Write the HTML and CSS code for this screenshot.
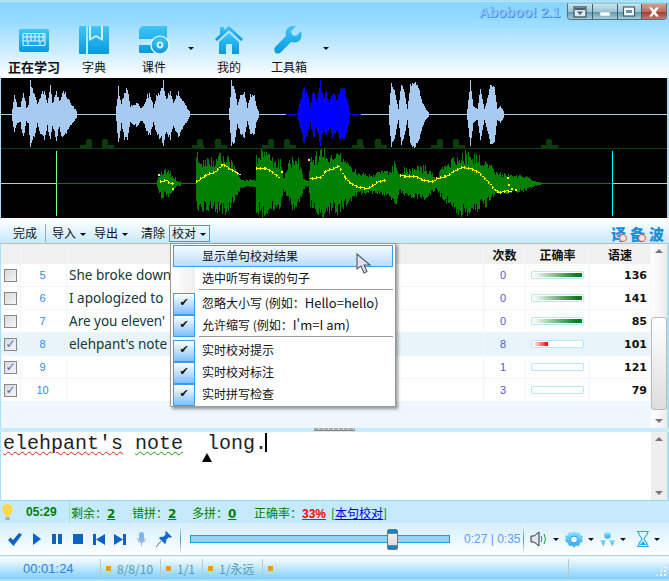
FILE: index.html
```html
<!DOCTYPE html>
<html lang="zh">
<head>
<meta charset="utf-8">
<title>Aboboo! 2.1</title>
<link rel="stylesheet" href="styles.css">
</head>
<body>
<svg class="defs" width="0" height="0" aria-hidden="true">
  <defs>
    <linearGradient id="ib" x1="0" y1="0" x2="0" y2="1"><stop offset="0" stop-color="#3fc6f6"/><stop offset="1" stop-color="#0a9ae2"/></linearGradient>
    <linearGradient id="ic" x1="0" y1="0" x2="0" y2="1"><stop offset="0" stop-color="#8fe4fb"/><stop offset="1" stop-color="#2ea6ee"/></linearGradient>
  </defs>
</svg>
<div class="app">
  <header class="head">
    <div class="titlebar">
      <span class="apptitle">Aboboo! 2.1</span>
      <div class="winbtns">
        <span class="wb"><svg width="14" height="12" viewBox="0 0 14 12"><rect x="1" y="1" width="12" height="10" fill="#dfe8ec" stroke="#46606e" stroke-width="1.4"/><rect x="2" y="2" width="10" height="2" fill="#46606e"/><path d="M4 5.500h6L7 9z" fill="#46606e"/></svg></span>
        <span class="wb"><svg width="14" height="12" viewBox="0 0 14 12"><rect x="2" y="6" width="10" height="4" fill="#fff" stroke="#8aa" stroke-width=".6"/></svg></span>
        <span class="wb"><svg width="14" height="12" viewBox="0 0 14 12"><rect x="1.500" y="1" width="11" height="9" fill="#fff" stroke="#40606e" stroke-width="1.200"/><rect x="4" y="4" width="6" height="3" fill="#5a96b8"/></svg></span>
        <span class="wb wb-close"><svg width="14" height="12" viewBox="0 0 14 12"><path d="M2 1.500h3L7 4l2-2.500h3L8.700 6 12 10.500H9L7 8l-2 2.500H2L5.300 6z" fill="#fff"/></svg></span>
      </div>
    </div>
    <nav class="tools">
      <div class="tool tool-active">
        <svg width="32" height="28" viewBox="0 0 32 28"><rect x="1" y="3" width="30" height="23" rx="2" fill="url(#ib)"/><path d="M6 7.500h20a1 1 0 0 1 1 1v10a1 1 0 0 1-1 1H6a1 1 0 0 1-1-1v-10a1 1 0 0 1 1-1zM5 11h22M5 15h22M9 7.500V15M13 7.500V15M17 7.500V15M21 7.500V15M25 7.500V15M10 15v4.500M22 15v4.500" fill="none" stroke="#d8f4fd" stroke-width="1.100"/></svg>
        <span>正在学习</span>
      </div>
      <div class="tool">
        <svg width="32" height="28" viewBox="0 0 32 28"><path d="M2 0h6v28H2a1 1 0 0 1-1-1V1a1 1 0 0 1 1-1zM10 0h20a1 1 0 0 1 1 1v26a1 1 0 0 1-1 1H10z" fill="url(#ib)"/><path d="M13 0v12l5-3 5 3V0h2v15l-7-4-7 4V0z" fill="#d4f1fc"/></svg>
        <span>字典</span>
      </div>
      <div class="tool">
        <svg width="32" height="28" viewBox="0 0 32 28"><path d="M6 0h23v13H1V5a5 5 0 0 1 5-5zM1 19h16v8H2a1 1 0 0 1-1-1z" fill="url(#ib)"/><circle cx="22" cy="19" r="9" fill="url(#ib)" stroke="#fff" stroke-width="1.200"/><circle cx="22" cy="19" r="3.400" fill="#d9f3fd"/><circle cx="22" cy="19" r="1.400" fill="#1aa6e8"/></svg>
        <span>课件</span>
      </div>
      <i class="drop drop-tool"></i>
      <div class="tool">
        <svg width="32" height="28" viewBox="0 0 32 28"><path d="M16 0l14 13-2 2L16 4 4 15l-2-2 5-5V1h4v3z" fill="url(#ib)"/><path d="M16 7l10 9v12h-7V18h-6v10H6V16z" fill="url(#ib)"/></svg>
        <span>我的</span>
      </div>
      <div class="tool">
        <svg width="32" height="28" viewBox="0 0 32 28"><path d="M28 5l-5 5-4-1-1-4 5-5c-4-1-9 1-10 5-1 3 0 4 0 5L3 20c-2 2-2 4-1 6s4 2 6 0l10-10c2 .5 5 1 8-1 3-2 3-7 2-10z" fill="url(#ib)"/></svg>
        <span>工具箱</span>
      </div>
      <i class="drop drop-tool"></i>
    </nav>
  </header>

  <svg id="wave" class="wave" width="666" height="140" viewBox="0 0 666 140" shape-rendering="crispEdges" role="img" aria-label="waveform"></svg>

  <div class="subbar">
    <span class="sb">完成</span>
    <i class="sb-sep"></i>
    <span class="sb">导入<i class="drop"></i></span>
    <span class="sb">导出<i class="drop"></i></span>
    <span class="sb sb-clear">清除</span>
    <span class="sb sb-on">校对<i class="drop"></i></span>
    <span class="logo"><b class="badged">译</b><b class="badged">备</b><b>波</b></span>
  </div>

  <section class="listarea">
    <div class="list">
      <div class="row row-head"><div></div><div></div><div></div><div>次数</div><div>正确率</div><div>语速</div></div>
      <div class="row"><div class="cb"><i class="check"></i></div><div class="idx">5</div><div class="sent">She broke down</div><div class="cnt">0</div><div class="bar"><i class="track"><i class="fill fill-g"></i></i></div><div class="spd">136</div></div>
      <div class="row"><div class="cb"><i class="check"></i></div><div class="idx">6</div><div class="sent">I apologized to</div><div class="cnt">0</div><div class="bar"><i class="track"><i class="fill fill-g"></i></i></div><div class="spd">141</div></div>
      <div class="row"><div class="cb"><i class="check"></i></div><div class="idx">7</div><div class="sent">Are you eleven'</div><div class="cnt">0</div><div class="bar"><i class="track"><i class="fill fill-g"></i></i></div><div class="spd">85</div></div>
      <div class="row row-sel"><div class="cb"><i class="check on">✓</i></div><div class="idx">8</div><div class="sent">elehpant's note</div><div class="cnt">8</div><div class="bar"><i class="track"><i class="fill fill-r"></i></i></div><div class="spd">101</div></div>
      <div class="row"><div class="cb"><i class="check on">✓</i></div><div class="idx">9</div><div class="sent"></div><div class="cnt">1</div><div class="bar"><i class="track"></i></div><div class="spd">121</div></div>
      <div class="row"><div class="cb"><i class="check on">✓</i></div><div class="idx">10</div><div class="sent"></div><div class="cnt">3</div><div class="bar"><i class="track"></i></div><div class="spd">79</div></div>
    </div>
    <div class="vscroll">
      <i class="arrow-up"></i>
      <i class="thumb"></i>
      <i class="arrow-down"></i>
    </div>
  </section>

  <div class="splitter"><i class="grip"></i></div>

  <section class="editor">
    <div class="typed"><span class="err-r">elehpant's</span> <span class="err-g">note</span>  long.<i class="caret"></i></div>
    <i class="missing"></i>
    <div class="vscroll vscroll-ed"><i class="arrow-up"></i><i class="arrow-down"></i></div>
  </section>

  <div class="status">
    <svg class="bulb" width="11" height="17" viewBox="0 0 11 17"><path d="M5.500 0a5.500 5.500 0 0 1 3 10c-.6.500-.8 1.500-.8 2.500H3.300c0-1-.2-2-.8-2.500a5.500 5.500 0 0 1 3-10z" fill="#ffd84a"/><rect x="3.500" y="13" width="4" height="3" fill="#aaa"/></svg>
    <span class="clock">05:29</span>
    <i class="st-sep"></i>
    <span class="st st1">剩余：<u>2</u></span>
    <span class="st st2">错拼：<u>2</u></span>
    <span class="st st3">多拼：<u>0</u></span>
    <span class="st st4">正确率：<u class="pct">33%</u></span>
    <span class="st st5">[<a href="#">本句校对</a>]</span>
  </div>

  <div class="controls">
    <svg class="c1" width="14" height="13" viewBox="0 0 14 13"><path d="M0 7l2.500-2.500L5 7l6-7 3 1.500L5.500 13z" fill="#0d63c4"/></svg>
    <svg class="c2" width="8" height="12" viewBox="0 0 8 12"><path d="M0 0l8 6-8 6z" fill="#0d63c4"/></svg>
    <svg class="c3" width="10" height="10" viewBox="0 0 10 10"><path d="M0 0h4v10H0zM6 0h4v10H6z" fill="#0d63c4"/></svg>
    <svg class="c4" width="10" height="10" viewBox="0 0 10 10"><rect width="10" height="10" fill="#0d63c4"/></svg>
    <svg class="c5" width="12" height="11" viewBox="0 0 12 11"><path d="M0 0h3v11H0zM12 0v11L3 5.500z" fill="#0d63c4"/></svg>
    <svg class="c6" width="12" height="11" viewBox="0 0 12 11"><path d="M12 0H9v11h3zM0 0v11l9-5.500z" fill="#0d63c4"/></svg>
    <svg class="c7" width="9" height="15" viewBox="0 0 9 15"><rect x="2" y="0" width="5" height="10" rx="2.500" fill="#7fb6ef"/><path d="M.7 6v1a3.800 3.800 0 0 0 7.600 0V6M4.500 11v3" fill="none" stroke="#9db9d6"/></svg>
    <svg class="c8" width="16" height="16" viewBox="0 0 16 16"><path d="M10 0l6 6-2 1-1-1-3 3c.5 1.500 0 3-1 4L3 7c1-1 2.500-1.500 4-1l3-3-1-1z" fill="#1266c8"/><path d="M5 10l-5 6" stroke="#667" fill="none"/></svg>
    <i class="ct-sep ct-sep1"></i>
    <div class="slider"><i class="knob"></i></div>
    <span class="time">0:27 | 0:35</span>
    <i class="ct-sep ct-sep2"></i>
    <svg class="c9" width="18" height="16" viewBox="0 0 18 16"><path d="M1 5h3l5-4v14l-5-4H1z" fill="#dfe6f2" stroke="#333"/><path d="M11 5q2 3 0 6" fill="none" stroke="#2a70c8"/><path d="M14 3q3 5 0 10" fill="none" stroke="#1f9c3c"/></svg>
    <i class="drop"></i>
    <svg class="c10" width="18" height="17" viewBox="0 0 18 17"><path d="M9 0l2 2 3-1 1 3 3 1-1 3 1 1-1 2-2 1-1 3-3-.5-2 2-2-2-3 .5-1-3-2-1-1-2 1-1-1-3 3-1 1-3 3 1z" fill="url(#ic)"/><circle cx="9" cy="8.500" r="3.500" fill="#e8f8ff" stroke="#2a9ae8"/></svg>
    <i class="drop"></i>
    <svg class="c11" width="15" height="15" viewBox="0 0 15 15"><circle cx="7.500" cy="3.500" r="3.300" fill="url(#ic)"/><path d="M0 8h6L3.500 14zM9 8h6l-2.500 6z" fill="url(#ic)"/></svg>
    <i class="drop"></i>
    <svg class="c12" width="12" height="16" viewBox="0 0 12 16"><path d="M0 .5h12M0 15.500h12M1.500 1c0 5 3.500 5 3.500 7s-3.500 2-3.500 7M10.500 1c0 5-3.500 5-3.500 7s3.500 2 3.500 7" fill="none" stroke="#2ab0e8" stroke-width="1.200"/><path d="M2.500 14l3.500-4 3.500 4z" fill="#2ab0e8"/></svg>
    <i class="drop"></i>
  </div>

  <footer class="foot">
    <span class="f-time">00:01:24</span>
    <span class="f-cell f1"><i class="sq"></i>8/8/10</span>
    <span class="f-cell f2"><i class="sq"></i>1/1</span>
    <span class="f-cell f3"><i class="sq"></i>1/永远</span>
    <span class="f-cell f4"><i class="sq"></i></span>
    <span class="f-end"></span>
    <span class="f-grip"></span>
  </footer>

  <div class="menu">
    <div class="mi mi-hot"><span class="mc"></span>显示单句校对结果</div>
    <div class="mi"><span class="mc"></span>选中听写有误的句子</div>
    <div class="ms"></div>
    <div class="mi"><span class="mc on"></span>忽略大小写 (例如：<span class="lat">Hello=hello)</span></div>
    <div class="mi"><span class="mc on"></span>允许缩写 (例如：<span class="lat">I'm=I am)</span></div>
    <div class="ms"></div>
    <div class="mi"><span class="mc on"></span>实时校对提示</div>
    <div class="mi"><span class="mc on"></span>实时校对标注</div>
    <div class="mi"><span class="mc on"></span>实时拼写检查</div>
  </div>
  <svg class="cursor" width="17" height="22" viewBox="0 0 17 22"><path d="M1 1v15l4-3 3 7 3-1.500-3-6.500h6z" fill="#dfe3e8" stroke="#556" stroke-width="1.100"/></svg>
</div>
<script src="script.js"></script>
</body>
</html>
```
FILE: styles.css
```css
* { box-sizing: border-box; }
html, body { margin: 0; padding: 0; }
body { width: 669px; height: 581px; overflow: hidden; font: 12px "Noto Sans CJK SC", "Liberation Sans", sans-serif; color: #111; }
i { font-style: normal; }
.defs { position: absolute; }
.app { position: relative; width: 669px; height: 581px; display: flex; flex-direction: column; background: #a8dff7; padding: 0 2px 2px 1px; overflow: hidden; }

.head { height: 77px; flex: none; margin: 1px -2px 0 -1px; padding: 0 2px 0 1px; border-top: 1px solid #b7e6f8; background: linear-gradient(#8ad6ff 0, #93daff 22%, #c9ecff 62%, #fff 100%); }
.titlebar { height: 23px; display: flex; justify-content: flex-end; align-items: flex-start; padding-top: 1px; }
.apptitle { font: bold 14px "Liberation Sans", sans-serif; color: #8cc6ff; text-shadow: 1px 1px 0 #3f8fe8; margin: 1px 7px 0 0; }
.winbtns { display: flex; width: 100px; height: 17px; border: 1px solid #54707e; border-top-color: #9cc; border-radius: 0 0 4px 4px; overflow: hidden; }
.wb { flex: 1; display: flex; align-items: center; justify-content: center; background: linear-gradient(#c9e3ec, #9cc6d6 50%, #5f9ab2 55%, #a8ccd8); border-right: 1px solid #3f5d6c; }
.wb-close { background: linear-gradient(#d69c90, #c06a5e 50%, #a03f35 55%, #c07a70); border-right: 0; }
.tools { display: flex; align-items: flex-start; padding: 1px 0 0 3px; }
.tool { width: 60px; display: flex; flex-direction: column; align-items: center; gap: 5px; line-height: 15px; white-space: nowrap; }
.tool svg { display: block; }
.tool-active span { font-weight: 700; font-size: 13px; }
.drop { display: inline-block; width: 0; height: 0; border: 3px solid transparent; border-top: 3px solid #111; border-bottom: 0; vertical-align: middle; margin-left: 4px; }
.drop-tool { margin: 21px 5px 0 4px; }

.wave { display: block; flex: none; background: #000; width: 666px; height: 140px; }

.subbar { height: 25px; flex: none; display: flex; align-items: flex-end; margin: 0 -2px 0 -1px; padding: 0 5px 0 12px; background: linear-gradient(#fff 5%, #c6e9fb); }
.sb { height: 17px; line-height: 15px; padding: 0 1px; white-space: nowrap; margin-bottom: 1px; }
.sb-sep { width: 1px; height: 18px; background: #9ab; margin: 0 5px 1px 7px; }
.sb + .sb { margin-left: 6px; }
.sb-clear { margin-left: 11px !important; }
.sb-on { margin-left: 3px !important; border: 1px solid #3a9cec; padding: 0 4px 0 2px; width: 41px; line-height: 14px; }
.logo { margin-left: auto; display: flex; gap: 4px; font: 700 15px/17px "Noto Sans CJK SC", sans-serif; color: #1a8fd8; margin-bottom: 1px; }
.badged { position: relative; }
.badged::after { content: ""; position: absolute; right: -1px; bottom: 0; width: 6px; height: 6px; border: 1px solid #e05a4a; border-radius: 50%; background: #fbe4df; }

.listarea { height: 185px; flex: none; display: flex; background: #eef7fe; border-top: 1px solid #bbb; }
.list { width: 649px; flex: none; display: flex; flex-direction: column; }
.row { display: grid; grid-template-columns: 19px 45px 416px 41px 63px 1fr; column-gap: 1px; height: 22px; margin-bottom: 1px; align-items: stretch; }
.row > div { background: #fff; display: flex; align-items: center; }
.row-head { height: 20px; margin-bottom: 0; }
.row-head > div { background: #f0f0f0; justify-content: center; font-weight: 700; }
.row-sel > div { background: #e8f4fa; }
.cb { justify-content: center; }
.check { width: 13px; height: 13px; border: 1px solid #888; background: linear-gradient(135deg, #d8d8d8, #f6f6f6); display: block; font: 700 12px/11px "DejaVu Sans", sans-serif; text-align: center; color: #4a6fc0; }
.idx { justify-content: center; color: #2a8cf0; font-size: 11px; font-family: "Liberation Sans", sans-serif; padding-right: 2px; }
.sent { padding-left: 2px; font: 13.500px "Noto Sans", "Liberation Sans", sans-serif; color: #0e3a3e; white-space: nowrap; }
.cnt { justify-content: center; padding-right: 3px; color: #5a5ab8; font: 11px "Liberation Sans", sans-serif; }
.bar { justify-content: center; }
.track { display: block; width: 53px; height: 8px; border: 1px solid #b5e6fa; border-radius: 2px; background: #fff; padding: 1px; }
.fill { display: block; height: 100%; }
.fill-g { background: linear-gradient(90deg, #fff, #007d1c 90%); }
.fill-r { width: 30%; background: linear-gradient(90deg, #fff, #f00); }
.spd { justify-content: flex-end; padding-right: 3px; font: 700 11px "DejaVu Sans", sans-serif; }

.vscroll { position: relative; width: 16px; flex: none; margin-left: 1px; background: linear-gradient(90deg, #fff, #ececec); }
.arrow-up, .arrow-down { position: absolute; left: 4px; width: 0; height: 0; border: 4px solid transparent; }
.arrow-up { top: 5px; border-bottom: 4px solid #777; border-top: 0; }
.arrow-down { bottom: 5px; border-top: 4px solid #777; border-bottom: 0; }
.thumb { position: absolute; left: 0; right: 0; top: 73px; height: 93px; border: 1px solid #bbb; border-radius: 3px; background: linear-gradient(#fff, #ddd); }

.splitter { height: 4px; flex: none; position: relative; background: #c5ebfd; margin: 0 -2px 0 -1px; }
.grip { position: absolute; left: 314px; top: 0; width: 41px; height: 3px; background: repeating-linear-gradient(90deg, #aaa 0 4px, #ddd 4px 5px); border-bottom: 1px solid #888; }

.editor { position: relative; height: 69px; flex: none; background: #fff; display: flex; border-bottom: 1px solid #9fd4ef; }
.typed { flex: 1; padding: 1px 0 0 2px; font: 20px/22px "Liberation Mono", monospace; white-space: pre; color: #222; }
.err-r { text-decoration: underline wavy #e02020 1px; text-underline-offset: 2px; }
.err-g { text-decoration: underline wavy #169b16 1px; text-underline-offset: 2px; }
.caret { display: inline-block; width: 2px; height: 19px; margin-left: -2px; background: #000; vertical-align: -3px; }
.missing { position: absolute; left: 201px; top: 21px; width: 0; height: 0; border: 5px solid transparent; border-bottom: 9px solid #000; border-top: 0; }
.vscroll-ed { background: #eee; }

.status { height: 22px; flex: none; position: relative; display: flex; align-items: center; background: #c5eafd; color: #008000; white-space: nowrap; margin: 0 -2px 0 -1px; padding-left: 2px; }
.bulb { flex: none; }
.clock { font: 700 12px "Liberation Sans", sans-serif; margin-left: 13px; width: 43px; }
.st-sep { width: 1px; height: 22px; background: #a8e0c0; }
.st { font-size: 12px; }
.st u { font: 700 12px "DejaVu Sans", sans-serif; }
.st1 { margin-left: 1px; width: 61px; }
.st2 { width: 60px; }
.st3 { width: 62px; }
.st4 { width: 77px; }
.st .pct { color: #f00; font: 700 12px "Liberation Sans", sans-serif; }
.st5 a { color: #0000e0; }

.controls { height: 32px; flex: none; display: flex; align-items: center; background: linear-gradient(#d4effd, #fff); margin: 0 -2px 0 -1px; padding-left: 8px; }
.controls svg { flex: none; }
.c2 { margin-left: 11px; } .c3 { margin-left: 11px; } .c4 { margin-left: 11px; } .c5 { margin-left: 10px; } .c6 { margin-left: 9px; } .c7 { margin-left: 11px; } .c8 { margin-left: 10px; }
.ct-sep { width: 1px; height: 30px; background: linear-gradient(#fff, #4a8fc0, #fff); flex: none; }
.ct-sep1 { margin-left: 8px; }
.slider { position: relative; width: 260px; height: 8px; margin-left: 9px; background: #8fd4fa; border: 1px solid #12a0e0; flex: none; }
.knob { position: absolute; left: 196px; top: -7px; width: 11px; height: 21px; border: 1px solid #777; border-radius: 2px; background: linear-gradient(#0d84cc 18%, #eee 20%, #ddd 80%, #0d84cc 82%); }
.time { margin-left: 14px; width: 59px; font: 12px "Liberation Sans", sans-serif; color: #5a9eff; white-space: nowrap; flex: none; }
.c9 { margin-left: 6px; } .c10 { margin-left: 6px; } .c11 { margin-left: 6px; } .c12 { margin-left: 11px; }
.controls .drop { margin-left: 5px; }

.foot { flex: 1; position: relative; display: flex; align-items: center; background: linear-gradient(#fff, #7fd0fb); margin: 1px -2px 0 -1px; border-top: 1px solid #d8f1fd; padding: 1px 0 0 23px; font: 12px "Liberation Sans", sans-serif; white-space: nowrap; }
.f-time { width: 77px; color: #2a7fe0; font-size: 13px; }
.f-cell { height: 19px; display: flex; align-items: center; gap: 6px; border-left: 1px solid #b8c8d4; padding-left: 5px; color: #5a9bb0; font-family: "Noto Sans CJK SC", sans-serif; }
.sq { width: 5px; height: 5px; background: #ff9800; display: block; }
.f1 { width: 60px; } .f2 { width: 42px; } .f3 { width: 60px; } .f4 { width: 306px; }
.f-end { width: 1px; height: 19px; background: #b8c8d4; }
.f-grip { position: absolute; right: 2px; bottom: 2px; width: 12px; height: 12px; background: radial-gradient(circle, #fff 1.100px, transparent 1.300px) 0 0 / 4px 4px; clip-path: polygon(100% 0, 100% 100%, 0 100%); }

.menu { position: absolute; left: 170px; top: 243px; width: 226px; height: 164px; padding: 1px 2px; border: 1px solid #999; background: linear-gradient(90deg, #fff 1px, #eee 24px, #fff 24px); box-shadow: 2px 2px 3px rgba(0, 0, 0, .4); }
.mi { position: relative; height: 22px; display: flex; align-items: center; white-space: nowrap; color: #111; font-size: 12px; padding-bottom: 1px; }
.mi-hot { border: 1px solid #3a9cec; background: linear-gradient(#f6fbff, #b8defc); padding-bottom: 2px; }
.mc { width: 29px; flex: none; display: block; height: 21px; }
.mi-hot .mc { width: 28px; }
.lat { font-size: 13px; }
.mc.on { position: relative; }
.mc.on::before { content: "✔"; position: absolute; left: 0; top: 1px; width: 20px; height: 20px; border: 1px solid #3a9cec; background: linear-gradient(#fff, #7fc0fa); font: 11px/18px "DejaVu Sans", sans-serif; color: #111; text-align: center; }
.ms { height: 3px; margin-left: 26px; border-top: 1px solid #999; }
.cursor { position: absolute; left: 356px; top: 253px; }
```
FILE: script.js
```js
(function () {
  var svg = document.getElementById('wave');
  var seed = 11;
  function rnd() { seed = (seed * 16807) % 2147483647; return seed / 2147483647; }
  function env(pts, x) {
    for (var i = 0; i < pts.length - 1; i++) {
      if (x >= pts[i][0] && x <= pts[i + 1][0]) {
        var t = (x - pts[i][0]) / ((pts[i + 1][0] - pts[i][0]) || 1);
        return pts[i][1] + (pts[i + 1][1] - pts[i][1]) * t;
      }
    }
    return 0;
  }
  function add(d, col) {
    var p = document.createElementNS('http://www.w3.org/2000/svg', 'path');
    p.setAttribute('d', d);
    p.setAttribute('fill', 'none');
    p.setAttribute('stroke', col);
    svg.appendChild(p);
  }
  function rect(x, y, w, h, col) {
    var r = document.createElementNS('http://www.w3.org/2000/svg', 'rect');
    r.setAttribute('x', x); r.setAttribute('y', y); r.setAttribute('width', w); r.setAttribute('height', h); r.setAttribute('fill', col);
    svg.appendChild(r);
  }
  var OX = 1, OY = 78;
  var top = 114 - OY, bot = 183 - OY;
  var light = '#a7cbf0', blue = '#0000ff', green = '#008000';

  function tone(n, comb) {
    var r = rnd();
    if (comb && r < comb) return 1 - n - .25 * rnd();
    return 1 - n * rnd();
  }
  function burst(pts, cy, noise, col, comb) {
    var d = '';
    for (var x = pts[0][0]; x <= pts[pts.length - 1][0]; x++) {
      var e = env(pts, x);
      var a = e * tone(noise, comb);
      var b = e * tone(noise, comb);
      d += 'M' + (x - 0.5) + ' ' + Math.round(cy - a) + 'V' + Math.round(cy + b + 1);
    }
    add(d, col);
  }

  rect(0, top, 666, 1, light);
  rect(286 - OX, top, 75, 1, blue);
  burst([[12,6],[14,20],[17,8],[20,8],[23,25],[26,7],[28,10],[30,33],[34,24],[37,10],[40,20],[44,26],[47,12],[50,30],[52,12],[56,26],[59,14],[62,25],[65,22],[68,16],[72,10],[76,3]], top, .22, light);
  burst([[116,8],[118,30],[121,10],[124,26],[127,28],[130,8],[134,11],[137,12],[141,6],[143,8],[147,20],[150,22],[153,7],[156,20],[160,25],[163,30],[166,18],[170,26],[173,12],[178,24],[182,16],[186,8],[189,3]], top, .22, light);
  burst([[229,6],[231,32],[234,28],[237,10],[240,20],[244,24],[247,7],[250,20],[254,20],[256,8],[258,3]], top, .15, light);
  burst([[298,6],[302,24],[304,30],[307,22],[310,8],[313,26],[316,14],[320,32],[323,18],[326,24],[329,14],[333,26],[337,16],[340,30],[344,28],[348,10],[349,3]], top, .25, blue);
  burst([[389,10],[391,32],[394,25],[398,5],[401,32],[404,22],[407,5],[410,30],[414,34],[418,28],[422,12],[426,4],[428,2]], top, .1, light);
  burst([[467,5],[470,32],[473,8],[477,5],[480,27],[484,5],[486,12],[490,30],[494,28],[497,5],[500,8],[503,3]], top, .1, light);
  [[30,light],[163,light],[231,light],[470,light],[320,blue]].forEach(function (s) { rect(s[0] - OX, 80 - OY, 1, 66, s[1]); });

  function hump(x, hx) {
    rect(x - OX, 145 - OY, 12, 3, '#0b3d0b');
    rect(hx - OX, 140 - OY, 6, 6, '#0b3d0b');
    rect(hx + 1 - OX, 139 - OY, 4, 1, '#0b3d0b');
  }
  [[80,86],[102,102],[192,197],[215,215],[262,268],[284,284],[352,357],[375,375],[431,437],[453,453],[541,546],[546,546]].forEach(function (h) { hump(h[0], h[1]); });
  rect(0, 148 - OY, 666, 1, '#0f3d0f');

  rect(0, bot, 666, 1, '#bcd0c4');
  rect(56 - OX, bot, 556, 1, green);
  burst([[157,3],[160,15],[163,16],[170,14],[175,6],[176,3],[180,2]], bot, .3, green, .4);
  burst([[196,31],[205,28],[215,29],[225,32],[232,22],[240,6],[245,3],[250,4],[255,3],[256,32],[262,35],[270,28],[280,26],[283,6],[290,26],[298,28],[303,8],[305,3],[308,3],[310,26],[316,32],[323,36],[330,30],[340,32],[345,26],[350,18],[360,11],[370,10],[380,12],[390,14],[395,24],[400,7],[404,16],[415,16],[425,20],[432,10],[436,5],[440,14],[450,24],[460,33],[470,33],[480,28],[490,20],[495,13],[505,10],[515,9],[525,8],[530,5],[535,2],[540,1]], bot, .22, green, .45);

  function line(pts) {
    for (var i = 0; i < pts.length - 1; i++) {
      var a = pts[i], b = pts[i + 1];
      for (var x = a[0]; x < b[0]; x += 2) {
        var y = a[1] + (b[1] - a[1]) * (x - a[0]) / (b[0] - a[0]);
        rect(x - OX, Math.round(y) - OY, 2, 1, '#ffff00');
        if ((x >> 1) % 2 === 0) rect(x - OX, Math.round(y) - 1 - OY, 1, 3, '#ffff00');
      }
    }
  }
  function dot(x, y) { rect(x - OX, y - OY, 2, 2, '#ffff00'); }
  line([[160,181],[166,180],[170,183],[174,182]]);
  dot(158, 174); dot(172, 188);
  line([[196,181],[205,175],[215,171],[222,164],[235,172],[240,175]]);
  line([[256,168],[265,168],[272,172],[280,178]]);
  dot(281, 171); dot(308, 159);
  line([[310,178],[320,177],[325,171],[338,166],[345,178],[350,183],[358,187],[367,188],[372,185],[378,181],[386,179]]);
  line([[400,175],[405,176],[415,176],[422,180],[432,181],[436,178],[445,176],[455,170],[462,167],[470,168],[478,172],[488,182],[495,190],[498,192],[506,190],[512,192]]);
  dot(507, 177); dot(508, 184); dot(511, 188); dot(515, 189);

  rect(56 - OX, 151 - OY, 1, 65, '#7cff7c');
  rect(612 - OX, 151 - OY, 1, 65, '#00ffff');
})();
```
